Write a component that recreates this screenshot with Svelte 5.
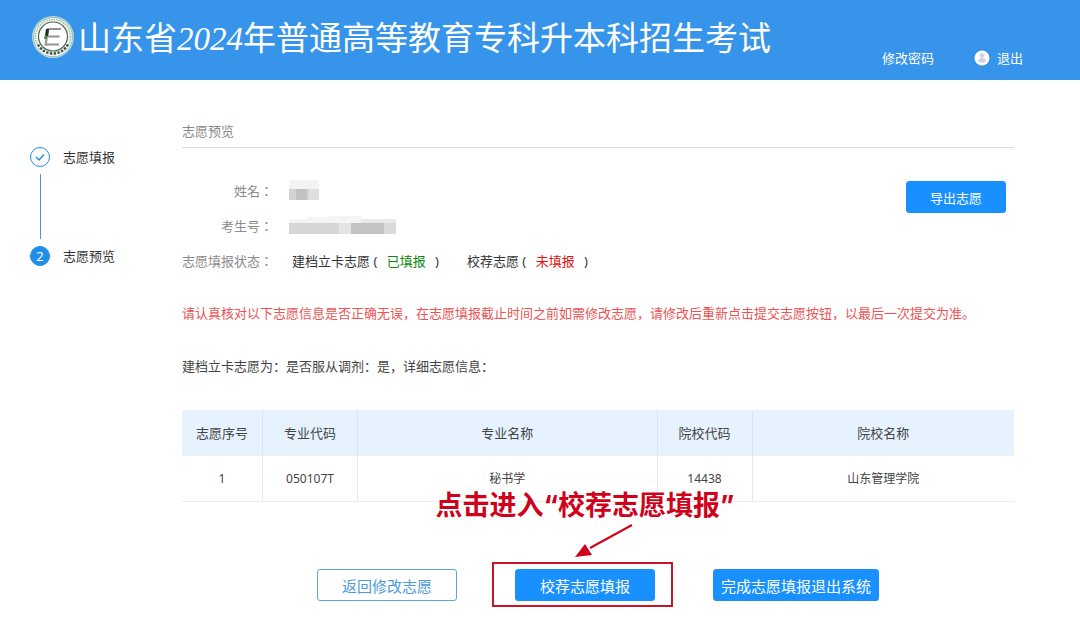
<script>
  const steps = [
    { label: "志愿填报", done: true },
    { label: "志愿预览", done: false },
  ];

  const status = [
    { name: "建档立卡志愿", text: "已填报", filled: true },
    { name: "校荐志愿", text: "未填报", filled: false },
  ];

  const columns = ["志愿序号", "专业代码", "专业名称", "院校代码", "院校名称"];
  const rows = [["1", "050107T", "秘书学", "14438", "山东管理学院"]];
</script>

<header>
  <div class="brand">
    <svg class="logo" viewBox="0 0 42 42" aria-hidden="true">
      <circle cx="21" cy="21" r="21" fill="#b9d8dc" />
      <circle cx="21" cy="21" r="19.5" fill="#f4f8f2" stroke="#8fb5a8" stroke-width=".8" />
      <circle cx="21" cy="21" r="17.5" fill="none" stroke="#9dbfae" stroke-width="1.6" stroke-dasharray="1.5 1" />
      <path d="M6 29a17 17 0 0 0 30 0" fill="none" stroke="#f4f8f2" stroke-width="4" />
      <path d="M6 28.500a17 17 0 0 0 30 0" fill="none" stroke="#35534b" stroke-width="2.4" stroke-dasharray="2.4 1.4" />
      <circle cx="21" cy="20.500" r="14.500" fill="#fff" stroke="#53664f" stroke-width="1.2" />
      <path d="M16 13h13M14.500 20.500h13M13 28.500h14" fill="none" stroke="#929292" stroke-width="2" />
      <path d="M16.500 12l-1.500 8-1.500 9.500" fill="none" stroke="#999" stroke-width="2.200" />
      <path d="M15.500 13l-1 7" fill="none" stroke="#1d2c1b" stroke-width="3" />
      <path d="M14 19.500l-1 3.500" stroke="#3c8b33" stroke-width="2.400" />
    </svg>
    <h1>山东省<span>2024</span>年普通高等教育专科升本科招生考试</h1>
  </div>
  <nav>
    <a href="#password">修改密码</a>
    <a href="#logout">
      <svg class="avatar" viewBox="0 0 16 16" aria-hidden="true">
        <circle cx="8" cy="8" r="7.500" fill="#fff" />
        <circle cx="8" cy="5.500" r="2.300" fill="#d5cfe2" />
        <path d="M4 11.500c0-5 8-5 8 0q-4 2.500-8 0z" fill="#d5cfe2" />
      </svg>
      退出
    </a>
  </nav>
</header>

<div class="layout">
  <ol class="steps">
    {#each steps as step, i}
      <li>
        <span class="dot" class:done={step.done}>
          {#if step.done}
            <svg viewBox="0 0 10 10" aria-hidden="true">
              <path d="M1 5l3 3 5-5.500" fill="none" stroke="currentColor" stroke-width="1.500" />
            </svg>
          {:else}
            {i + 1}
          {/if}
        </span>
        <span>{step.label}</span>
      </li>
    {/each}
  </ol>

  <main>
    <h2>志愿预览</h2>

    <div class="info">
      <dl>
        <dt>姓名：</dt>
        <dd>
          <svg class="mask" width="30" height="20" viewBox="0 0 30 20" aria-hidden="true">
            <path d="M0 0h30v9H0z" fill="#f3f3f3" />
            <path d="M0 9h7v11H0z" fill="#d2d2d2" />
            <path d="M7 9h11v11H7z" fill="#c1c1c1" />
            <path d="M18 9h2v11h-2z" fill="#d4d4d4" />
            <path d="M20 9h10v11H20z" fill="#dedfe1" />
          </svg>
        </dd>
        <dt>考生号：</dt>
        <dd>
          <svg class="mask" width="107" height="18" viewBox="0 0 107 18" aria-hidden="true">
            <path d="M0 3h18V1h22V0h32v3h35v5H0z" fill="#f4f4f4" />
            <path d="M72 3h35v4H72z" fill="#e9e9e9" />
            <path d="M0 7h107v11H0z" fill="#d6d6d6" />
            <path d="M50 7h12v11H50z" fill="#e4e4e4" />
            <path d="M62 7h33v11H62z" fill="#c3c3c3" />
            <path d="M95 7h12v11H95z" fill="#dadada" />
          </svg>
        </dd>
        <dt>志愿填报状态：</dt>
        <dd class="status">
          {#each status as item}
            <span>{item.name} ( <b class:filled={item.filled}>{item.text}</b> )</span>
          {/each}
        </dd>
      </dl>
      <button class="primary export">导出志愿</button>
    </div>

    <p class="warning">
      请认真核对以下志愿信息是否正确无误，在志愿填报截止时间之前如需修改志愿，请修改后重新点击提交志愿按钮，以最后一次提交为准。
    </p>
    <p class="summary">建档立卡志愿为：是否服从调剂：是，详细志愿信息：</p>

    <table>
      <thead>
        <tr>
          {#each columns as column}
            <th>{column}</th>
          {/each}
        </tr>
      </thead>
      <tbody>
        {#each rows as row}
          <tr>
            {#each row as cell}
              <td>{cell}</td>
            {/each}
          </tr>
        {/each}
      </tbody>
    </table>

    <div class="actions">
      <button class="outline">返回修改志愿</button>
      <div class="marked">
        <button class="primary">校荐志愿填报</button>
        <div class="frame"></div>
        <div class="tip">点击进入“校荐志愿填报”</div>
        <svg class="arrow" viewBox="0 0 60 36" aria-hidden="true">
          <path d="M58 2L16 25" stroke="#d0021b" stroke-width="2" />
          <path d="M1 34l10-13 7 11z" fill="#d0021b" />
        </svg>
      </div>
      <button class="primary">完成志愿填报退出系统</button>
    </div>
  </main>
</div>

<style>
  :global(body) {
    margin: 0;
    background: #fff;
    color: #444;
    font-family: "Noto Sans", "Noto Sans CJK SC", sans-serif;
    font-size: 13px;
    line-height: 20px;
  }

  header {
    display: flex;
    justify-content: space-between;
    height: 80px;
    box-sizing: border-box;
    padding: 0 57px 0 32px;
    background: #3794eb;
    color: #fff;
  }

  .brand {
    display: flex;
    align-items: center;
    gap: 4px;
    height: 74px;
  }

  .logo {
    width: 42px;
    height: 42px;
  }

  h1 {
    margin: 0;
    padding-top: 4px;
    font-family: "Liberation Serif", "Noto Sans CJK SC", serif;
    font-size: 33px;
    font-weight: 400;
    line-height: 40px;
    white-space: nowrap;
  }

  h1 span {
    font-style: italic;
  }

  nav {
    display: flex;
    align-items: flex-end;
    gap: 40px;
    padding-bottom: 12px;
  }

  nav a {
    display: flex;
    align-items: center;
    gap: 7px;
    color: #fff;
    text-decoration: none;
    white-space: nowrap;
  }

  .avatar {
    width: 16px;
    height: 16px;
  }

  .layout {
    display: flex;
    padding: 41px 66px 24px 30px;
  }

  .steps {
    flex: none;
    width: 152px;
    margin: 0;
    padding: 26px 0 0;
    list-style: none;
    color: #333;
  }

  .steps li {
    display: grid;
    grid-template-columns: 20px auto;
    column-gap: 13px;
  }

  .steps li:not(:last-child)::after {
    content: "";
    width: 1px;
    height: 65px;
    margin: 7px auto;
    background: #4a98d4;
  }

  .dot {
    display: flex;
    align-items: center;
    justify-content: center;
    width: 20px;
    height: 20px;
    box-sizing: border-box;
    border: 1px solid #1f8fe8;
    border-radius: 50%;
    background: #1f8fe8;
    color: #fff;
  }

  .dot.done {
    background: #fff;
    color: #1f8fe8;
  }

  .dot svg {
    width: 10px;
    height: 10px;
  }

  main {
    flex: 1;
    min-width: 0;
  }

  h2 {
    margin: 0 0 26px;
    padding-bottom: 6px;
    border-bottom: 1px solid #dcdcdc;
    color: #888;
    font-size: 13px;
    font-weight: 400;
  }

  .info {
    display: flex;
    align-items: flex-start;
    justify-content: space-between;
    padding-right: 8px;
  }

  dl {
    display: grid;
    grid-template-columns: 91px auto;
    column-gap: 16px;
    margin: 0;
    line-height: 35px;
  }

  /* TC keeps the colon centred in its box */
  dt {
    color: #8c8c8c;
    font-family: "Noto Sans", "Noto Sans CJK TC", sans-serif;
    text-align: right;
  }

  dd {
    display: flex;
    align-items: center;
    margin: 0;
  }

  .mask {
    margin-bottom: 4px;
    shape-rendering: crispEdges;
  }

  .status {
    gap: 28px;
    padding-left: 3px;
    color: #333;
  }

  .status b {
    margin: 0 6px;
    color: #e60f0f;
    font-weight: 400;
  }

  .status b.filled {
    color: #0b860b;
  }

  button {
    height: 32px;
    padding: 0 7px;
    border: 1px solid #1890ff;
    border-radius: 3px;
    font-family: inherit;
    font-size: 15px;
    white-space: nowrap;
    cursor: pointer;
  }

  .primary {
    background: #1890ff;
    color: #fff;
  }

  .outline {
    border-color: #5ba7dd;
    background: #fff;
    color: #4b9bd8;
  }

  .export {
    width: 100px;
    margin-top: 7px;
    font-size: 13px;
  }

  p {
    margin: 0;
  }

  .warning {
    margin-top: 24px;
    color: #ec5353;
  }

  .summary {
    margin: 33px 0 34px;
  }

  table {
    width: 100%;
    table-layout: fixed;
    border-collapse: separate;
    border-spacing: 0;
    text-align: center;
  }

  th,
  td {
    height: 45px;
    padding: 0;
    border-bottom: 1px solid #ececec;
    font-size: 12px;
  }

  th {
    box-sizing: border-box;
    height: 46px;
    background: #e6f3ff;
    font-size: 13px;
    font-weight: 400;
  }

  th:not(:last-child),
  td:not(:last-child) {
    border-right: 1px solid #e6eaee;
  }

  th:not(:last-child) {
    border-right-color: #d6e4f0;
  }

  th:nth-child(1) {
    width: 81px;
  }

  th:nth-child(2),
  th:nth-child(4) {
    width: 95px;
  }

  th:nth-child(3) {
    width: 36%;
  }

  .actions {
    display: flex;
    justify-content: center;
    gap: 58px;
    margin-top: 67px;
  }

  .actions .outline,
  .marked button {
    width: 140px;
  }

  .marked {
    position: relative;
  }

  .frame {
    position: absolute;
    inset: -7px -18px -6px -23px;
    border: 2px solid #c8142a;
    pointer-events: none;
  }

  .tip {
    position: absolute;
    bottom: 77px;
    left: 50%;
    transform: translateX(-50%);
    color: #d0021b;
    font-family: Inter, "Noto Sans CJK SC", sans-serif;
    font-size: 27px;
    font-weight: 700;
    line-height: 36px;
    white-space: nowrap;
    pointer-events: none;
  }

  .arrow {
    position: absolute;
    bottom: 42px;
    left: 59px;
    width: 60px;
    height: 36px;
    pointer-events: none;
  }
</style>
